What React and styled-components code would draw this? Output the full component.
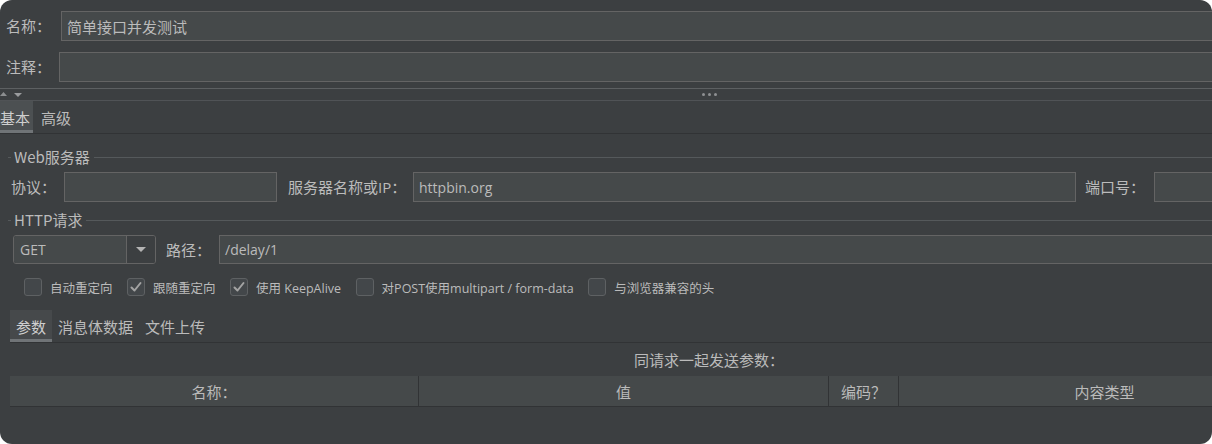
import React from 'react';
import styled, { createGlobalStyle } from 'styled-components';

const Global = createGlobalStyle`
  html, body { margin: 0; padding: 0; background: #ffffff; }
  #root { width: 1212px; height: 444px; }
`;

const Frame = styled.div`
  width: 1212px;
  height: 444px;
  border-radius: 12px;
  overflow: hidden;
  background: #3c3f41;
  font-family: "Open Sans", "Noto Sans CJK SC", sans-serif;
  color: #bbbbbb;
  font-size: 15px;
`;

const Canvas = styled.div`
  width: 1418px;
  display: flex;
  flex-direction: column;
  padding-top: 11px;
`;

const FormRow = styled.div`
  display: flex;
  align-items: center;
  padding-left: ${p => p.$pl || 0}px;
  margin-top: ${p => p.$mt || 0}px;
`;

const Label = styled.div`
  flex: none;
  width: ${p => p.$w}px;
  margin-left: ${p => p.$ml || 0}px;
  white-space: nowrap;
  font-size: 15px;
  line-height: 20px;
`;

const Field = styled.div`
  box-sizing: border-box;
  height: ${p => p.$h || 30}px;
  width: ${p => (p.$w ? `${p.$w}px` : 'auto')};
  flex: ${p => (p.$w ? 'none' : '1')};
  background: #45494a;
  border: 1px solid #646464;
  padding: 0 5px;
  display: flex;
  align-items: center;
  font-size: ${p => p.$fs || 15}px;
  white-space: nowrap;
  color: #bbbbbb;
`;

const Splitter = styled.div`
  margin-top: 6px;
  height: 11px;
  border-top: 1px solid #5d6062;
  border-bottom: 1px solid #505356;
  display: grid;
  grid-template-columns: 22px 1fr 22px;
  align-items: center;
`;

const Dots = styled.div`
  display: flex;
  justify-content: center;
  gap: 3px;
`;

const Dot = styled.span`
  width: 3px;
  height: 3px;
  border-radius: 50%;
  background: #8e9092;
`;

const TabStrip = styled.div`
  display: flex;
  height: 32px;
  border-bottom: 1px solid #313335;
  margin-top: ${p => p.$mt || 0}px;
`;

const Tab = styled.div`
  height: 100%;
  box-sizing: border-box;
  display: flex;
  align-items: center;
  padding: ${p => p.$pad};
  font-size: 15px;
  background: ${p => (p.$active ? p.$activeBg : 'transparent')};
  box-shadow: ${p => (p.$active ? 'inset 0 -3px 0 #707477' : 'none')};
  color: ${p => (p.$active ? '#cfcfcf' : '#bbbbbb')};
`;

const GroupTitle = styled.div`
  display: flex;
  align-items: center;
  height: 20px;
  margin-top: ${p => p.$mt}px;
  padding-left: 8px;
  &::before {
    content: '';
    width: 3px;
    height: 1px;
    background: #55595b;
  }
  &::after {
    content: '';
    flex: 1;
    height: 1px;
    background: #55595b;
  }
`;

const GroupText = styled.span`
  margin: 0 4px 0 3px;
  font-size: 15px;
  line-height: 20px;
  white-space: nowrap;
  font-family: "Noto Sans CJK SC", sans-serif;
`;

const Combo = styled.div`
  box-sizing: border-box;
  flex: none;
  width: 143px;
  height: 29px;
  border: 1px solid #646464;
  border-radius: 3px;
  display: flex;
  overflow: hidden;
`;

const ComboValue = styled.div`
  flex: 1;
  background: #45494a;
  padding-left: 6px;
  display: flex;
  align-items: center;
  font-size: 14px;
`;

const ComboArrow = styled.div`
  width: 28px;
  border-left: 1px solid #646464;
  background: #3c3f41;
  display: flex;
  align-items: center;
  justify-content: center;
`;

const CheckRow = styled.div`
  display: flex;
  align-items: center;
  gap: 14.5px;
  padding-left: 24px;
  margin-top: 14px;
  height: 18px;
`;

const CheckItem = styled.label`
  display: flex;
  align-items: center;
  gap: 8px;
  font-size: 12.5px;
  white-space: nowrap;
`;

const Box = styled.span`
  box-sizing: border-box;
  width: 18px;
  height: 18px;
  border: 1px solid #5e6163;
  border-radius: 3px;
  background: #43474a;
  display: flex;
  align-items: center;
  justify-content: center;
`;

const SubPanel = styled.div`
  margin: 14px 10px 0;
  display: flex;
  flex-direction: column;
`;

const Caption = styled.div`
  margin-top: 7px;
  height: 20px;
  line-height: 20px;
  text-align: center;
  font-size: 15px;
`;

const TableHead = styled.div`
  margin-top: 6px;
  display: grid;
  grid-template-columns: 409px 410px 70px 412px 1fr;
  height: 31px;
  box-sizing: border-box;
  background: #45494a;
  border-bottom: 1px solid #313335;
`;

const HeadCell = styled.div`
  display: flex;
  align-items: center;
  justify-content: center;
  font-size: 15px;
  border-right: 1px solid #313335;
  &:last-child { border-right: none; }
`;

const Check = ({ checked, children }) => (
  <CheckItem>
    <Box>
      {checked && (
        <svg width="14" height="14" viewBox="0 0 14 14">
          <path d="M2.5 7.5 L5.5 10.5 L11.5 3" fill="none" stroke="#a3a3a3" strokeWidth="2" strokeLinecap="round" strokeLinejoin="round" />
        </svg>
      )}
    </Box>
    <span>{children}</span>
  </CheckItem>
);

export default function App() {
  return (
    <>
      <Global />
      <Frame>
        <Canvas>
          <FormRow $pl={6}>
            <Label $w={55}>名称：</Label>
            <Field>简单接口并发测试</Field>
          </FormRow>
          <FormRow $pl={6} $mt={11}>
            <Label $w={53}>注释：</Label>
            <Field />
          </FormRow>

          <Splitter>
            <svg width="22" height="11" viewBox="0 0 22 11">
              <polygon points="0,7 3.5,3 7,7" fill="#8c8e90" />
              <polygon points="14,4 22,4 18,8" fill="#9a9c9e" />
            </svg>
            <Dots>
              <Dot />
              <Dot />
              <Dot />
            </Dots>
            <span />
          </Splitter>

          <TabStrip>
            <Tab $active $activeBg="#4c5052" $pad="0 3px 0 0">基本</Tab>
            <Tab $pad="0 8px">高级</Tab>
          </TabStrip>

          <GroupTitle $mt={13}>
            <GroupText>Web服务器</GroupText>
          </GroupTitle>
          <FormRow $pl={11} $mt={5}>
            <Label $w={53}>协议：</Label>
            <Field $w={213} />
            <Label $ml={11} $w={125}>服务器名称或IP：</Label>
            <Field $w={663} $fs={14}>httpbin.org</Field>
            <Label $ml={9} $w={69}>端口号：</Label>
            <Field />
          </FormRow>

          <GroupTitle $mt={8}>
            <GroupText>HTTP请求</GroupText>
          </GroupTitle>
          <FormRow $pl={13} $mt={5}>
            <Combo>
              <ComboValue>GET</ComboValue>
              <ComboArrow>
                <svg width="10" height="5" viewBox="0 0 10 5">
                  <polygon points="0,0 10,0 5,5" fill="#b4b4b4" />
                </svg>
              </ComboArrow>
            </Combo>
            <Label $ml={10} $w={53}>路径：</Label>
            <Field $h={29} $fs={14}>/delay/1</Field>
          </FormRow>

          <CheckRow>
            <Check>自动重定向</Check>
            <Check checked>跟随重定向</Check>
            <Check checked>使用 KeepAlive</Check>
            <Check>对POST使用multipart / form-data</Check>
            <Check>与浏览器兼容的头</Check>
          </CheckRow>

          <SubPanel>
            <TabStrip>
              <Tab $active $activeBg="#46494b" $pad="0 6px">参数</Tab>
              <Tab $pad="0 6px">消息体数据</Tab>
              <Tab $pad="0 6px">文件上传</Tab>
            </TabStrip>
            <Caption>同请求一起发送参数：</Caption>
            <TableHead>
              <HeadCell>名称：</HeadCell>
              <HeadCell>值</HeadCell>
              <HeadCell>编码？</HeadCell>
              <HeadCell>内容类型</HeadCell>
              <HeadCell />
            </TableHead>
          </SubPanel>
        </Canvas>
      </Frame>
    </>
  );
}
